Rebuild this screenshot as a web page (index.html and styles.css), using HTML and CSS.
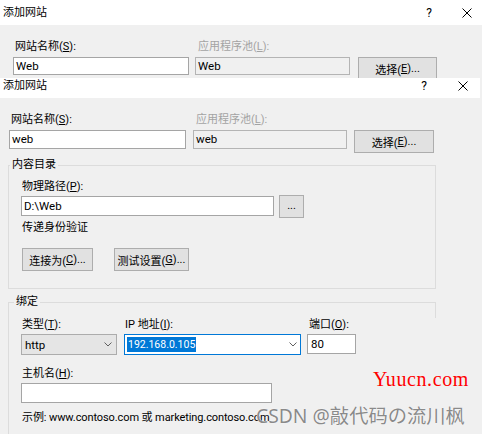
FILE: index.html
```html
<!DOCTYPE html>
<html lang="zh-CN">
<head>
<meta charset="utf-8">
<title>添加网站</title>
<link rel="stylesheet" href="styles.css">
</head>
<body>
<div class="dlg dlg1">
  <div class="titlebar t1">
    <span class="title">添加网站</span>
    <span class="help">?</span>
    <svg class="close" width="10" height="10" viewBox="0 0 10 10"><path d="M0.5 0.5 L9.5 9.5 M9.5 0.5 L0.5 9.5" stroke="#000" stroke-width="1" fill="none"/></svg>
  </div>
  <div class="dbody b1">
    <div class="siterow s1">
      <span class="lbl">网站名称(<u>S</u>):</span>
      <span class="lbl dis">应用程序池(<u>L</u>):</span>
      <span></span>
      <div class="tb">Web</div>
      <div class="tb tbdis">Web</div>
      <div class="btn pick">选择(<u>E</u>)...</div>
    </div>
  </div>
</div>

<div class="dlg dlg2">
  <div class="titlebar t2">
    <span class="title">添加网站</span>
    <span class="help">?</span>
    <svg class="close" width="10" height="10" viewBox="0 0 10 10"><path d="M0.5 0.5 L9.5 9.5 M9.5 0.5 L0.5 9.5" stroke="#000" stroke-width="1" fill="none"/></svg>
  </div>
  <div class="dbody b2">
    <div class="siterow s2">
      <span class="lbl">网站名称(<u>S</u>):</span>
      <span class="lbl dis">应用程序池(<u>L</u>):</span>
      <span></span>
      <div class="tb">web</div>
      <div class="tb tbdis">web</div>
      <div class="btn">选择(<u>E</u>)...</div>
    </div>

    <div class="group g1">
      <span class="legend">内容目录</span>
      <div class="flabel first">物理路径(<u>P</u>):</div>
      <div class="pathrow">
        <div class="tb path">D:\Web</div>
        <div class="btn dots">...</div>
      </div>
      <div class="flabel auth">传递身份验证</div>
      <div class="btnrow">
        <div class="btn b-conn">连接为(<u>C</u>)...</div>
        <div class="btn b-test">测试设置(<u>G</u>)...</div>
      </div>
    </div>

    <div class="group g2">
      <span class="legend lg2">绑定</span>
      <div class="bindgrid">
        <span class="lbl">类型(<u>T</u>):</span>
        <span class="lbl">IP 地址(<u>I</u>):</span>
        <span class="lbl">端口(<u>O</u>):</span>
        <div class="combo sel">
          <span class="ctext">http</span>
          <svg class="chev" width="8" height="5" viewBox="0 0 8 5"><path d="M0.5 0.5 L4 4 L7.5 0.5" stroke="#606060" stroke-width="1" fill="none"/></svg>
        </div>
        <div class="combo ip">
          <span class="ctext"><span class="hl">192.168.0.105</span></span>
          <svg class="chev" width="8" height="5" viewBox="0 0 8 5"><path d="M0.5 0.5 L4 4 L7.5 0.5" stroke="#606060" stroke-width="1" fill="none"/></svg>
        </div>
        <div class="tb port">80</div>
      </div>
      <div class="flabel host">主机名(<u>H</u>):</div>
      <div class="tb hostin"></div>
      <div class="flabel example">示例: www.contoso.com 或 marketing.contoso.com</div>
    </div>
  </div>
</div>

<div class="wm wm-yuucn">Yuucn.com</div>
<div class="wm wm-csdn">CSDN @敲代码の流川枫</div>
</body>
</html>
```

FILE: styles.css
```css
* { box-sizing: border-box; }
html, body { margin: 0; padding: 0; }
body {
  width: 482px;
  height: 434px;
  overflow: hidden;
  position: relative;
  background: #f0f0f0;
  font-family: Roboto, "Noto Sans CJK SC", sans-serif;
  font-size: 11px;
  color: #000;
}
u { text-decoration: underline; text-underline-offset: 1px; }

/* title bars */
.titlebar { display: flex; background: #fff; }
.title { flex: 1; line-height: 16px; }
.help { width: 12px; text-align: center; line-height: 16px; font-size: 12px; }
.close { display: block; }

.t1 { height: 25px; align-items: center; padding-left: 3px; padding-right: 10px; }
.t1 .help { margin-right: 27px; }

.t2 { height: 20px; width: 480px; align-items: flex-start; padding-left: 3px; padding-right: 12px; }
.t2 .help { margin-right: 28px; }
.t2 .close { margin-top: 3px; }

/* bodies */
.b1 { height: 53px; overflow: hidden; padding-top: 14px; }
.b2 { padding-top: 14px; height: 336px; overflow: hidden; }

.siterow { display: grid; grid-template-rows: 16px auto; row-gap: 2px; align-items: start; }
.s1 { grid-template-columns: 176px 155px 81px; column-gap: 6px; padding-left: 13px; }
.s1 .pick { margin-left: 2px; }
.s1 .tb { height: 18px; line-height: 16px; }
.s2 { grid-template-columns: 177px 154px 80px; column-gap: 7px; padding-left: 9px; }
.s2 .tb { height: 19px; line-height: 17px; }

.lbl { line-height: 16px; padding-left: 2px; white-space: nowrap; }
.lbl.dis { color: #a3a3a3; padding-left: 3px; }

/* controls */
.tb {
  background: #fff;
  border: 1px solid #a5a5a5;
  padding-left: 2px;
  white-space: nowrap;
  overflow: hidden;
  font-size: 11.5px;
}
.tbdis { background: #f0f0f0; border-color: #b4b4b4; }

.btn {
  height: 23px;
  background: #e1e1e1;
  border: 1px solid #adadad;
  display: flex;
  align-items: center;
  justify-content: center;
  white-space: nowrap;
}

/* group boxes */
.group {
  margin-left: 8px;
  width: 428px;
  border: 1px solid #dcdcdc;
}
.legend {
  display: block;
  width: fit-content;
  margin: -9px 0 0 1px;
  padding: 0 2px;
  line-height: 16px;
  background: #f0f0f0;
}
.flabel { line-height: 16px; padding-left: 13px; white-space: nowrap; }

.g1 { margin-top: 12px; padding-bottom: 17px; }
.g1 .first { margin-top: 6px; }
.pathrow { display: flex; align-items: flex-start; margin-left: 12px; }
.path { width: 253px; height: 20px; line-height: 18px; margin-top: 1px; }
.dots { width: 25px; margin-left: 5px; padding-bottom: 3px; }
.auth { margin-top: 2px; }
.btnrow { display: flex; column-gap: 21px; margin-top: 12px; padding-left: 13px; }
.b-conn { width: 71px; }
.b-test { width: 75px; }

.g2 {
  margin-top: 13px;
  border-right: none;
  border-bottom: none;
  padding-bottom: 8px;
  position: relative;
}
.g2::after {
  content: "";
  position: absolute;
  top: -1px;
  right: 0;
  width: 1px;
  height: 16px;
  background: #dcdcdc;
}
.lg2 { margin-left: 5px; }

.bindgrid {
  display: grid;
  grid-template-columns: 96px 177px 48px;
  grid-template-rows: 16px auto;
  column-gap: 7px;
  row-gap: 1px;
  margin-top: 7px;
  padding-left: 12px;
  align-items: start;
}
.bindgrid .lbl { padding-left: 1px; }
.combo {
  height: 21px;
  display: flex;
  align-items: center;
  justify-content: space-between;
  font-size: 11.5px;
}
.chev { display: block; }
.sel {
  background: #e5e5e5;
  border: 1px solid #acacac;
  padding-left: 3px;
  padding-right: 4px;
}
.ip {
  background: #fff;
  border: 1px solid #0078d7;
  padding-left: 2px;
  padding-right: 3px;
}
.hl { background: #0078d7; color: #fff; display: inline-block; line-height: 15px; padding: 0 1px; font-size: 10.5px; }
.port { height: 20px; line-height: 18px; margin-left: -1px; padding-left: 3px; }

.host { margin-top: 11px; }
.hostin { margin-left: 12px; margin-top: 1px; width: 251px; height: 20px; }
.example { margin-top: 7px; letter-spacing: -0.1px; }

/* watermarks */
.wm { position: absolute; white-space: nowrap; }
.wm-yuucn {
  left: 373px;
  top: 368px;
  font-family: "Liberation Serif", serif;
  font-size: 20px;
  letter-spacing: 0.6px;
  color: #ff0000;
}
.wm-csdn {
  left: 256px;
  top: 404px;
  font-family: "Noto Sans", "Noto Sans CJK SC", sans-serif;
  font-size: 19.3px;
  line-height: 24px;
  color: #8a8a8a;
  text-shadow: 0 0 1px #fff, 0 0 1px #fff;
}
```
